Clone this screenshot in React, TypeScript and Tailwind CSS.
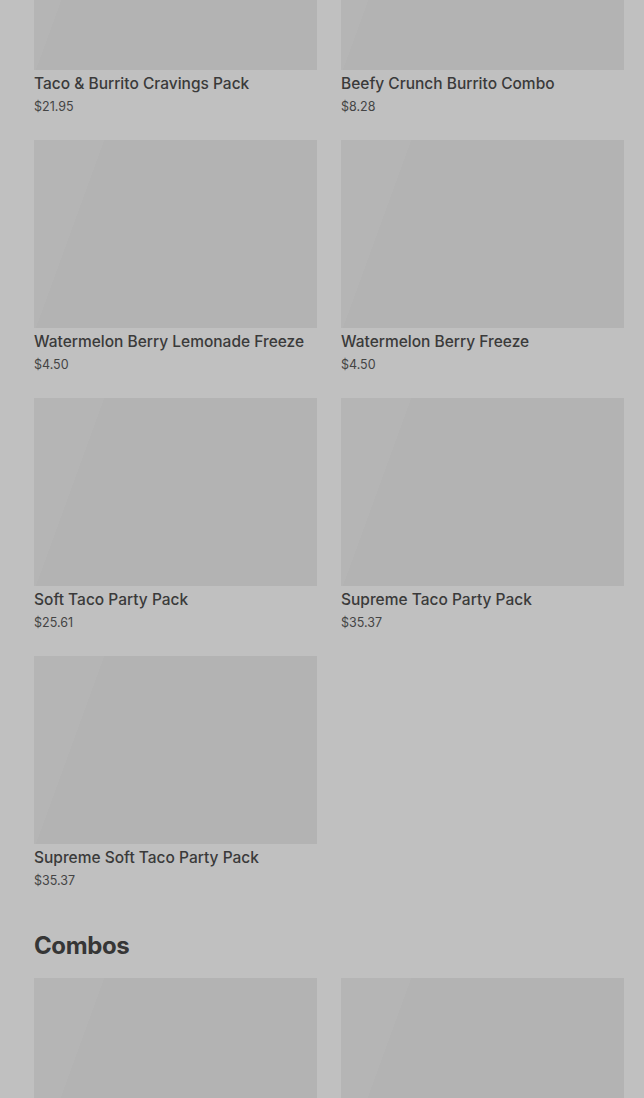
import React from "react";

const items = [
  { name: "Taco & Burrito Cravings Pack", price: "$21.95" },
  { name: "Beefy Crunch Burrito Combo", price: "$8.28" },
  { name: "Watermelon Berry Lemonade Freeze", price: "$4.50" },
  { name: "Watermelon Berry Freeze", price: "$4.50" },
  { name: "Soft Taco Party Pack", price: "$25.61" },
  { name: "Supreme Taco Party Pack", price: "$35.37" },
  { name: "Supreme Soft Taco Party Pack", price: "$35.37" },
];

function Thumb() {
  return (
    <div className="relative h-[188px] w-full overflow-hidden bg-[#b3b3b3]">
      <div className="absolute inset-0 bg-[linear-gradient(110deg,#b5b5b5_0%,#b5b5b5_20%,#b3b3b3_20%,#b3b3b3_100%)]" />
    </div>
  );
}

function Card({ name, price }: { name: string; price: string }) {
  return (
    <div className="flex flex-col">
      <Thumb />
      <div className="mt-[2px] text-[15.5px] leading-[24px] font-medium text-[#3a3a3a] whitespace-nowrap">{name}</div>
      <div className="mt-[1px] text-[12.5px] leading-[20px] text-[#444444]">{price}</div>
    </div>
  );
}

export default function App() {
  return (
    <div className="h-[1098px] w-[644px] overflow-hidden bg-[#c0c0c0]" style={{ fontFamily: "Inter, 'Noto Sans', sans-serif" }}>
      <div className="-mt-[118px] pl-[34px] pr-[20px]">
        <div className="grid grid-cols-2 gap-x-[24px] gap-y-[23px]">
          {items.map((it) => (
            <Card key={it.name} {...it} />
          ))}
        </div>
        <h2 className="mt-[39px] text-[24px] leading-[32px] font-bold text-[#363636] tracking-[-0.4px]">Combos</h2>
        <div className="mt-[16px] grid grid-cols-2 gap-x-[24px]">
          <Thumb />
          <Thumb />
        </div>
      </div>
    </div>
  );
}
